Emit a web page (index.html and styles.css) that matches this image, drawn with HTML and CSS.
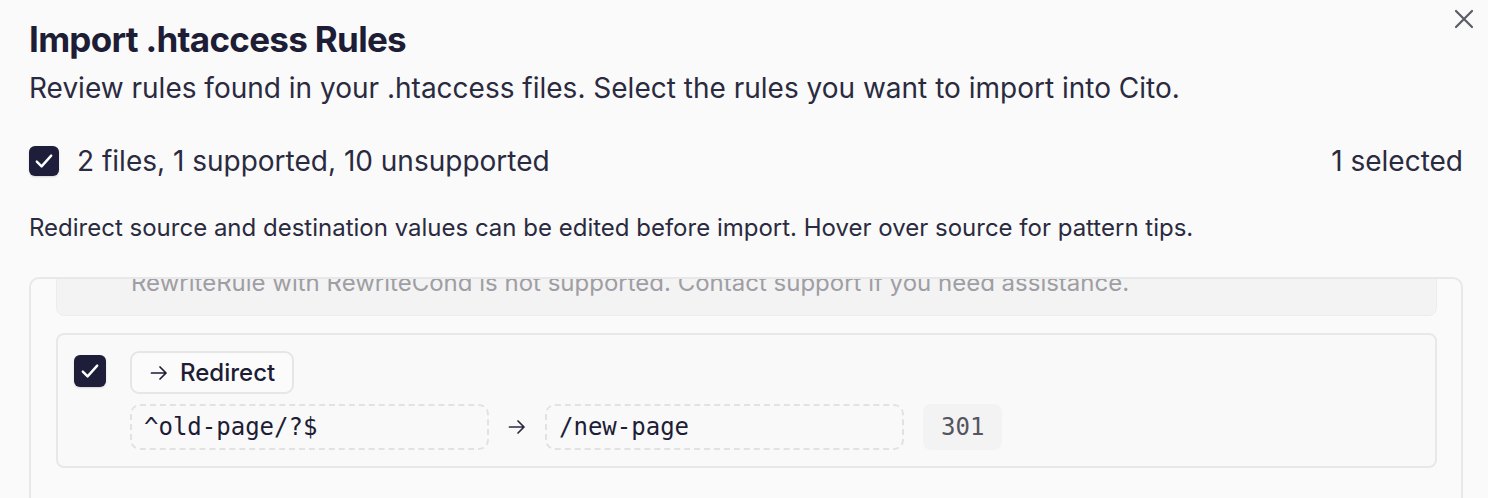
FILE: index.html
```html
<!DOCTYPE html>
<html lang="en">
<head>
    <meta charset="UTF-8">
    <meta name="viewport" content="width=device-width, initial-scale=1.0">
    <title>Import .htaccess Rules</title>
    <link rel="stylesheet" href="styles.css">
</head>
<body>
    <div class="dialog">
        <button class="close" type="button" aria-label="Close">
            <svg width="20" height="20" viewBox="0 0 20 20" fill="none" stroke="currentColor" stroke-width="2.2" stroke-linecap="round">
                <path d="M2 2 L18 18 M18 2 L2 18"/>
            </svg>
        </button>

        <header class="dialog-header">
            <h1>Import .htaccess Rules</h1>
            <p class="subtitle">Review rules found in your .htaccess files. Select the rules you want to import into Cito.</p>
        </header>

        <div class="summary">
            <label class="summary-label">
                <span class="checkbox">
                    <svg viewBox="0 0 20 20" fill="none" stroke="#fff" stroke-width="2" stroke-linecap="round" stroke-linejoin="round"><path d="M4 10.5 L8 14.5 L16 5.5"/></svg>
                </span>
                2 files, 1 supported, 10 unsupported
            </label>
            <span class="selected-count">1 selected</span>
        </div>

        <p class="hint">Redirect source and destination values can be edited before import. Hover over source for pattern tips.</p>

        <div class="rules">
            <div class="rules-list">
                <div class="rule rule-unsupported">
                    <p class="rule-note">RewriteRule with RewriteCond is not supported. Contact support if you need assistance.</p>
                </div>

                <div class="rule">
                    <span class="checkbox checkbox-lg">
                        <svg viewBox="0 0 20 20" fill="none" stroke="#fff" stroke-width="2" stroke-linecap="round" stroke-linejoin="round"><path d="M4 10.5 L8 14.5 L16 5.5"/></svg>
                    </span>
                    <div class="rule-body">
                        <span class="badge">
                            <svg width="18" height="18" viewBox="0 0 18 18" fill="none" stroke="currentColor" stroke-width="1.7" stroke-linecap="round" stroke-linejoin="round"><path d="M1.5 9 H16 M10 3 L16 9 L10 15"/></svg>
                            Redirect
                        </span>
                        <div class="rule-fields">
                            <span class="field">^old-page/?$</span>
                            <svg class="field-arrow" width="18" height="18" viewBox="0 0 18 18" fill="none" stroke="currentColor" stroke-width="1.7" stroke-linecap="round" stroke-linejoin="round"><path d="M1.5 9 H16 M10 3 L16 9 L10 15"/></svg>
                            <span class="field">/new-page</span>
                            <span class="status">301</span>
                        </div>
                    </div>
                </div>
            </div>
        </div>
    </div>
</body>
</html>
```

FILE: styles.css
```css
/* Base */
html, body {
    margin: 0;
    padding: 0;
    height: 100%;
    overflow: hidden;
}

body {
    font-family: 'Inter', 'Noto Sans', sans-serif;
    background: #fafafa;
    color: #1f1f38;
}

.dialog {
    position: relative;
    padding: 17px 25px 0 29px;
}

.close {
    position: absolute;
    top: 9px;
    right: 14px;
    padding: 0;
    border: none;
    background: none;
    color: #5b5b68;
    cursor: pointer;
}

.close svg {
    display: block;
}

/* Header */
h1 {
    margin: 0;
    font-size: 35px;
    line-height: 44px;
    font-weight: 700;
    letter-spacing: -0.7px;
    color: #1d1d36;
}

.subtitle {
    margin: 9px 0 0;
    font-size: 28px;
    line-height: 36px;
    color: #2a2a40;
}

/* Summary row */
.summary {
    display: flex;
    justify-content: space-between;
    align-items: center;
    margin-top: 37px;
    font-size: 28px;
    line-height: 36px;
    color: #2a2a40;
}

.summary-label {
    display: flex;
    align-items: center;
    gap: 18px;
}

.checkbox {
    display: inline-flex;
    align-items: center;
    justify-content: center;
    width: 30px;
    height: 30px;
    border-radius: 6px;
    background: #1e1e3b;
    box-shadow: 0 1px 2px rgba(0, 0, 0, 0.15);
    flex-shrink: 0;
}

.checkbox svg {
    width: 24px;
    height: 24px;
}

.checkbox-lg {
    width: 32px;
    height: 32px;
    margin-top: 4px;
}

.hint {
    margin: 33px 0 0;
    font-size: 24px;
    line-height: 32px;
    color: #2a2a40;
}

/* Rules list */
.rules {
    margin-top: 33px;
    height: 400px;
    border: 2px solid #e8e8e8;
    border-radius: 10px;
    overflow: hidden;
}

.rules-list {
    display: flex;
    flex-direction: column;
    gap: 17px;
    padding: 0 24px 0 25px;
    margin-top: -21px;
}

.rule {
    display: flex;
    align-items: flex-start;
    gap: 24px;
    padding: 16px 16px 16px;
    border: 2px solid #e8e8e8;
    border-radius: 8px;
    background: #f9f9f9;
}

.rule-unsupported {
    padding: 8px 17px 16px 74px;
    border-width: 1px;
    border-color: #ececec;
    background: #f3f3f3;
}

.rule-note {
    margin: 0;
    font-size: 24px;
    line-height: 32px;
    color: #9e9ea4;
}

.rule-body {
    display: flex;
    flex-direction: column;
    align-items: flex-start;
    gap: 10px;
}

.badge {
    display: inline-flex;
    align-items: center;
    gap: 12px;
    height: 43px;
    padding: 0 17px 0 18px;
    box-sizing: border-box;
    border: 2px solid #e6e6e6;
    border-radius: 9px;
    background: #fbfbfb;
    font-size: 24px;
    font-weight: 500;
    color: #1d1d36;
}

.rule-fields {
    display: flex;
    align-items: center;
    gap: 19px;
}

.field {
    display: flex;
    align-items: center;
    width: 359px;
    height: 46px;
    box-sizing: border-box;
    padding: 0 12px;
    border: 2px dashed #e2e2e2;
    border-radius: 10px;
    font-family: 'DejaVu Sans Mono', monospace;
    font-size: 24px;
    color: #1d1d36;
}

.field-arrow {
    color: #2a2a40;
}

.status {
    display: flex;
    align-items: center;
    height: 46px;
    padding: 0 18px;
    border-radius: 8px;
    background: #f3f3f3;
    font-family: 'DejaVu Sans Mono', monospace;
    font-size: 24px;
    color: #55555f;
}
```
